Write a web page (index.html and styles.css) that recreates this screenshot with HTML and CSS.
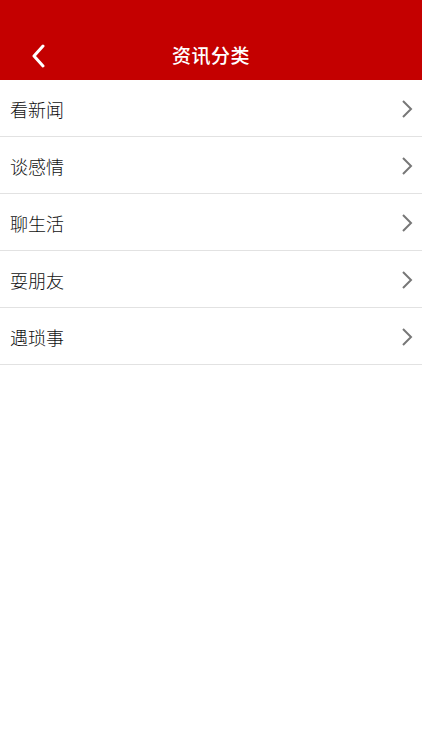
FILE: index.html
```html
<!DOCTYPE html>
<html lang="zh-CN">
<head>
    <meta charset="UTF-8">
    <meta name="viewport" content="width=device-width, initial-scale=1.0">
    <title>资讯分类</title>
    <link rel="stylesheet" href="styles.css">
</head>
<body>
    <header class="topbar">
        <a class="back" href="#">
            <svg width="14" height="24" viewBox="0 0 14 24">
                <polyline points="12,2 3,12 12,22" fill="none" stroke="#fff" stroke-width="3" stroke-linecap="round" stroke-linejoin="round"/>
            </svg>
        </a>
        <h1 class="title">资讯分类</h1>
    </header>

    <ul class="menu">
        <li><a href="#"><span>看新闻</span><svg class="arrow" width="12" height="20" viewBox="0 0 12 20"><polyline points="2,2 10,10 2,18" fill="none" stroke="#777" stroke-width="2"/></svg></a></li>
        <li><a href="#"><span>谈感情</span><svg class="arrow" width="12" height="20" viewBox="0 0 12 20"><polyline points="2,2 10,10 2,18" fill="none" stroke="#777" stroke-width="2"/></svg></a></li>
        <li><a href="#"><span>聊生活</span><svg class="arrow" width="12" height="20" viewBox="0 0 12 20"><polyline points="2,2 10,10 2,18" fill="none" stroke="#777" stroke-width="2"/></svg></a></li>
        <li><a href="#"><span>耍朋友</span><svg class="arrow" width="12" height="20" viewBox="0 0 12 20"><polyline points="2,2 10,10 2,18" fill="none" stroke="#777" stroke-width="2"/></svg></a></li>
        <li><a href="#"><span>遇琐事</span><svg class="arrow" width="12" height="20" viewBox="0 0 12 20"><polyline points="2,2 10,10 2,18" fill="none" stroke="#777" stroke-width="2"/></svg></a></li>
    </ul>
</body>
</html>
```

FILE: styles.css
```css
body {
    margin: 0;
    padding: 0;
    background: #fff;
    font-family: "Noto Sans CJK SC", "Noto Sans", sans-serif;
    color: #111;
}
.topbar {
    position: relative;
    height: 80px;
    background-color: #c40000;
    display: flex;
    align-items: center;
    justify-content: center;
    padding-top: 28px;
    box-sizing: border-box;
}
.back {
    position: absolute;
    left: 31px;
    top: 44px;
    display: block;
    width: 14px;
    height: 24px;
}
.back svg {
    display: block;
}
.title {
    margin: 0;
    font-size: 19px;
    font-weight: 500;
    color: #fff;
    letter-spacing: 0.5px;
}
.menu {
    list-style: none;
    margin: 0;
    padding: 0;
}
.menu li {
    border-bottom: 1px solid #e2e2e2;
}
.menu a {
    display: flex;
    align-items: center;
    justify-content: space-between;
    height: 56px;
    padding: 1px 9px 0 10px;
    box-sizing: border-box;
    color: #111;
    text-decoration: none;
    font-size: 18px;
    font-weight: 300;
}
.arrow {
    display: block;
}
```
